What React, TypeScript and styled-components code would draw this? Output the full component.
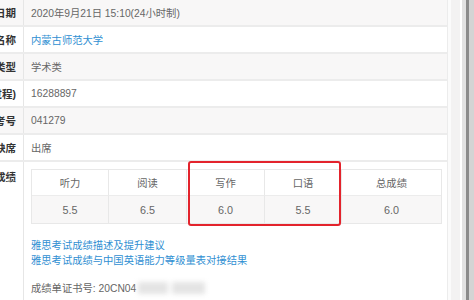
import React from 'react'
import styled, { createGlobalStyle } from 'styled-components';

const GlobalStyle = createGlobalStyle`
  html, body {
    margin: 0;
    padding: 0;
    background: #ffffff;
  }
  body {
    font-family: "Liberation Sans", "Noto Sans CJK SC", sans-serif;
    font-size: 10.3px;
    color: #555;
  }
`

type InfoRow = {
    label: string;
    value: string;
    link?: boolean;
}

const rows: InfoRow[] = [
    { label: '考试日期', value: '2020年9月21日 15:10(24小时制)' },
    { label: '考点名称', value: '内蒙古师范大学', link: true },
    { label: '考试类型', value: '学术类' },
    { label: '准考证号(过程)', value: '16288897' },
    { label: '考号', value: '041279' },
    { label: '是否缺席', value: '出席' },
]

const scores = [
    { name: '听力', value: '5.5' },
    { name: '阅读', value: '6.5' },
    { name: '写作', value: '6.0' },
    { name: '口语', value: '5.5' },
    { name: '总成绩', value: '6.0' },
]

const App: React.FC = () => {
    return (
        <>
            <GlobalStyle />
            <Page>
                <Sheet>
                    {rows.map((row, i) => (
                        <Row key={row.label} $shaded={i % 2 === 0}>
                            <Label><span>{row.label}</span></Label>
                            <Value $link={row.link}>{row.value}</Value>
                        </Row>
                    ))}
                    <ScoreRow>
                        <Label $top><span>考试成绩</span></Label>
                        <ScoreCell>
                            <ScoreTable>
                                {scores.map(s => (
                                    <HeadCell key={s.name}>{s.name}</HeadCell>
                                ))}
                                {scores.map(s => (
                                    <BodyCell key={s.name}>{s.value}</BodyCell>
                                ))}
                                <Highlight />
                            </ScoreTable>
                            <Links>
                                <LinkText>雅思考试成绩描述及提升建议</LinkText>
                                <LinkText>雅思考试成绩与中国英语能力等级量表对接结果</LinkText>
                            </Links>
                            <Cert>
                                成绩单证书号: 20CN04
                                <Masked>
                                    <Smudge $w={30} />
                                    <Smudge $w={33} />
                                </Masked>
                            </Cert>
                        </ScoreCell>
                    </ScoreRow>
                </Sheet>
                <Gutter />
                <ScrollTrack>
                    <TrackEdge />
                    <TrackThumb />
                    <TrackOuter />
                </ScrollTrack>
            </Page>
        </>
    )
}

export default App;


const Page = styled.div`
  display: flex;
  width: 474px;
  height: 300px;
  overflow: hidden;
`

const Sheet = styled.div`
  width: 448px;
  flex-shrink: 0;
  display: flex;
  flex-direction: column;
  border-right: 1px solid #ececec;
  box-sizing: border-box;
`

const Row = styled.div<{ $shaded?: boolean }>`
  display: flex;
  height: 27px;
  box-sizing: border-box;
  border-bottom: 2px solid #ececec;
  background: ${p => (p.$shaded ? '#f8f7f7' : '#ffffff')};
`

const Label = styled.div<{ $top?: boolean }>`
  width: 24px;
  flex-shrink: 0;
  display: flex;
  justify-content: flex-end;
  align-items: ${p => (p.$top ? 'flex-start' : 'center')};
  padding: ${p => (p.$top ? '7px 7px 0 0' : '0 7px 0 0')};
  box-sizing: border-box;
  overflow: hidden;
  white-space: nowrap;
  border-right: 1px solid #e6e6e6;
  font-weight: bold;
  color: #333;
  font-size: 10.5px;
`

const Value = styled.div<{ $link?: boolean }>`
  display: flex;
  align-items: center;
  padding-left: 7px;
  color: ${p => (p.$link ? '#2f8fd2' : '#666')};
  white-space: nowrap;
`

const ScoreRow = styled.div`
  display: flex;
  flex: 1;
  background: #ffffff;
`

const ScoreCell = styled.div`
  flex: 1;
  padding: 7px 5px 0 7px;
`

const ScoreTable = styled.div`
  position: relative;
  display: grid;
  grid-template-columns: 77px 78px 78px 77px 1fr;
  grid-template-rows: 26px 27px;
  border: 1px solid #e8e8e8;
  color: #666;
`

const HeadCell = styled.div`
  display: flex;
  align-items: center;
  justify-content: center;
  background: #ffffff;
  border-right: 1px solid #e8e8e8;
  border-bottom: 1px solid #ececec;
  &:nth-child(5) {
    border-right: none;
  }
`

const BodyCell = styled.div`
  display: flex;
  align-items: center;
  justify-content: center;
  background: #f8f7f7;
  border-right: 1px solid #e8e8e8;
  font-size: 10.8px;
  &:nth-child(10) {
    border-right: none;
  }
`

/* hand-drawn annotation around writing + speaking */
const Highlight = styled.div`
  position: absolute;
  left: 156px;
  top: -9px;
  width: 153px;
  height: 65px;
  box-sizing: border-box;
  border: 2px solid #e3232c;
  border-radius: 3px;
  pointer-events: none;
`

const Links = styled.div`
  margin-top: 14px;
  display: flex;
  flex-direction: column;
`

const LinkText = styled.span`
  line-height: 15px;
  color: #2f8fd2;
  white-space: nowrap;
`

const Cert = styled.div`
  margin-top: 12px;
  display: flex;
  align-items: center;
  white-space: nowrap;
  color: #666;
`

const Masked = styled.span`
  display: inline-flex;
  gap: 4px;
  margin-left: 2px;
  filter: blur(2.5px);
`

const Smudge = styled.span<{ $w: number }>`
  width: ${p => p.$w}px;
  height: 12px;
  background: #e4e4e4;
`

const Gutter = styled.div`
  width: 12px;
  flex-shrink: 0;
  background: linear-gradient(to right, #fbfbfb 0 3px, #f3f2f2 3px);
`

const ScrollTrack = styled.div`
  flex: 1;
  display: flex;
  background: #ffffff;
  padding-left: 2px;
`

const TrackEdge = styled.div`
  width: 4px;
  background: #e2e2e2;
`

const TrackThumb = styled.div`
  width: 3px;
  background: #8b8b8b;
`

const TrackOuter = styled.div`
  flex: 1;
  background: #d4d4d4;
`
